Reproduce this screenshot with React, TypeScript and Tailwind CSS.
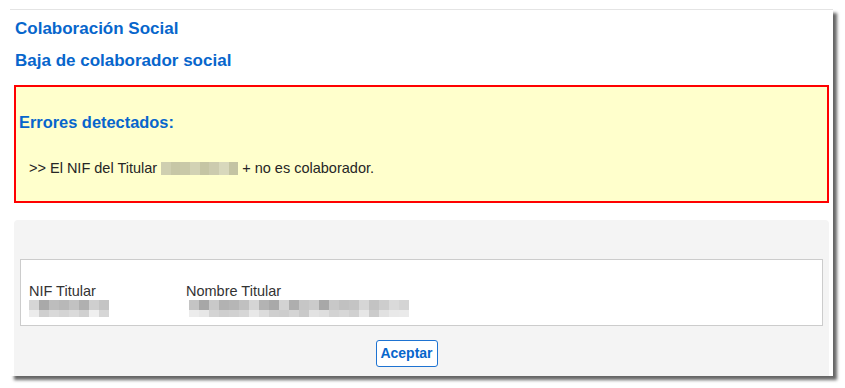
const msgBlur = ['#cfcfb0', '#c7c7a6', '#c9c9a8', '#d2d2b4', '#c5c5a4', '#cccbae', '#d8d8bc', '#c4c4a3'];
const nifTop = ['#d6d6d6', '#a9a9a9', '#bdbdbd', '#b8b8b8', '#c2c2c2', '#b0b0b0', '#cfcfcf', '#c4c4c4'];
const nifBot = ['#ececec', '#cfcfcf', '#d9d9d9', '#d4d4d4', '#dadada', '#d0d0d0', '#efefef', '#d6d6d6'];
const nameTop = ['#c4c4c4', '#a7a7a7', '#c9c9c9', '#b2b2b2', '#b6b6b6', '#c0c0c0', '#d5d5d5', '#b3b3b3', '#a9a9a9', '#d3d3d3', '#aeaeae', '#c6c6c6', '#cbcbcb', '#a8a8a8', '#c8c8c8', '#c1c1c1', '#c4c4c4', '#d6d6d6', '#c3c3c3', '#cdcdcd', '#dadada', '#d4d4d4'];
const nameBot = ['#ececec', '#e7e7e7', '#d4d4d4', '#cecece', '#d1d1d1', '#d6d6d6', '#e8e8e8', '#dcdcdc', '#cfcfcf', '#cdcdcd', '#d4d4d4', '#c9c9c9', '#e2e2e2', '#dedede', '#d3d3d3', '#d7d7d7', '#d0d0d0', '#e6e6e6', '#cbcbcb', '#e1e1e1', '#e9e9e9', '#eaeaea'];

const Blur = ({ top, bottom }: { top: string[]; bottom?: string[] }) => (
  <div className="flex flex-col">
    <div className="flex">
      {top.map((c, i) => (
        <div key={i} className="w-[10px] h-[10px]" style={{ backgroundColor: c }} />
      ))}
    </div>
    {bottom && (
      <div className="flex">
        {bottom.map((c, i) => (
          <div key={i} className="w-[10px] h-[7px]" style={{ backgroundColor: c }} />
        ))}
      </div>
    )}
  </div>
);

export default function App() {
  return (
    <div className="w-[845px] h-[388px] bg-white pt-[9px] pl-[10px] font-['Liberation_Sans',Arial,sans-serif]">
      <div className="w-[823px] h-[367px] bg-white border-t border-[#e4e4e4] shadow-[4px_4px_3px_rgba(0,0,0,0.6)] px-[4px]">
        {/* Headers */}
        <h1 className="pl-[1px] pt-[9px] text-[17px] leading-[20px] font-bold text-[#0766cc]">
          Colaboración Social
        </h1>
        <h2 className="pl-[1px] mt-[12px] text-[17px] leading-[20px] font-bold text-[#0766cc]">
          Baja de colaborador social
        </h2>

        {/* Errores */}
        <div className="mt-[14px] h-[118px] border-2 border-[#ff0000] bg-[#ffffcc] pl-[3px]">
          <div className="pt-[25px] text-[16.4px] leading-[20px] font-bold text-[#0766cc]">
            Errores detectados:
          </div>
          <div className="mt-[27px] pl-[10px] flex items-center text-[14.5px] leading-[18px] text-[#262626]">
            <span>&gt;&gt; El NIF del Titular&nbsp;</span>
            <div className="w-[77px] h-[13px] flex">
              {msgBlur.map((c, i) => (
                <div key={i} className="flex-1 h-full" style={{ backgroundColor: c }} />
              ))}
            </div>
            <span>&nbsp;+ no es colaborador.</span>
          </div>
        </div>

        {/* Datos */}
        <div className="mt-[17px] h-[156px] bg-[#f4f4f4] rounded-t-[4px] pt-[39px] px-[6px]">
          <div className="h-[67px] bg-white border border-[#cccccc] pl-[8px] pt-[23px] flex gap-[77px] text-[14.5px] leading-[17px] text-[#333]">
            <div className="w-[80px]">
              <div>NIF Titular</div>
              <Blur top={nifTop} bottom={nifBot} />
            </div>
            <div>
              <div>Nombre Titular</div>
              <div className="pl-[3px]">
                <Blur top={nameTop} bottom={nameBot} />
              </div>
            </div>
          </div>
          <div className="flex justify-center mt-[14px]">
            <button className="h-[27px] w-[62px] border border-[#1e73d2] rounded-[3px] bg-white text-[14px] font-bold text-[#0766cc] mr-[30px]">
              Aceptar
            </button>
          </div>
        </div>
      </div>
    </div>
  );
}
